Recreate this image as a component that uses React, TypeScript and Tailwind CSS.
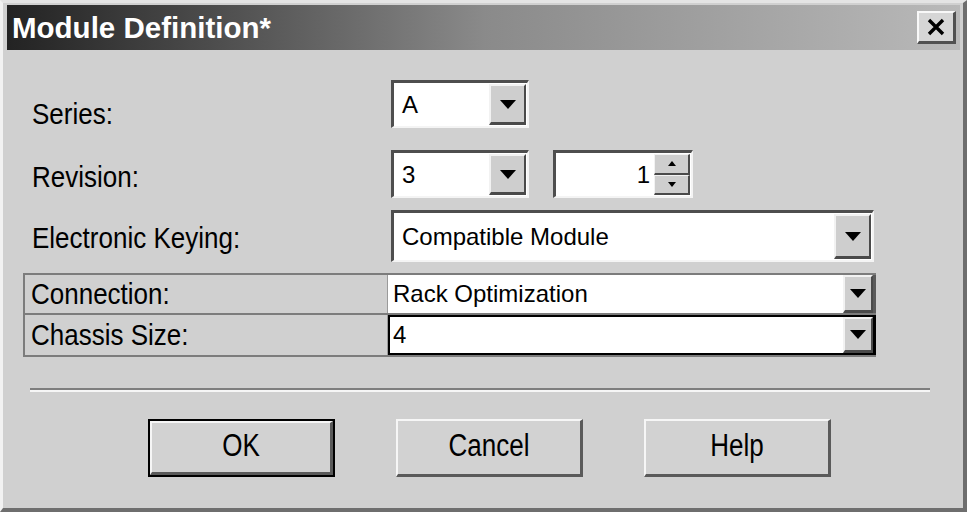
import React from "react";

const Arrow = () => (
  <svg width="16" height="9" viewBox="0 0 16 9">
    <polygon points="0,0 16,0 8,9" fill="#000" />
  </svg>
);

const DropBtn = ({ cls }: { cls: string }) => (
  <div
    className={
      "flex items-center justify-center bg-[#cecece] border-t-2 border-l-2 border-t-[#f2f2f2] border-l-[#f2f2f2] border-r-2 border-b-[3px] border-r-[#4a4a4a] border-b-[#4a4a4a] " +
      cls
    }
  >
    <Arrow />
  </div>
);

const Combo = ({ cls, text }: { cls: string; text: string }) => (
  <div
    className={
      "flex bg-white border-t-[3px] border-l-[3px] border-t-[#4e4e4e] border-l-[#4e4e4e] border-r-2 border-b-2 border-r-[#f4f4f4] border-b-[#f4f4f4] " +
      cls
    }
  >
    <div className="flex-1 flex items-center pl-[8px] text-[24px] text-black leading-none">
      {text}
    </div>
    <DropBtn cls="w-[37px] m-[1px]" />
  </div>
);

const Btn = ({ text, def }: { text: string; def?: boolean }) => (
  <div
    className={
      "w-[187px] h-[58px] " +
      (def ? "border-2 border-black" : "")
    }
  >
    <div className="w-full h-full flex items-center justify-center bg-[#d2d2d2] border-t-2 border-l-2 border-t-[#f6f6f6] border-l-[#f6f6f6] border-r-[3px] border-b-[3px] border-r-[#5a5a5a] border-b-[#5a5a5a] text-[26px] text-black">
      <span className="inline-block scale-y-[1.2] -translate-y-[2px]">{text}</span>
    </div>
  </div>
);

export default function App() {
  return (
    <div
      className="w-[967px] h-[512px] flex flex-col bg-[#d0d0d0] border-l-[3px] border-t-[3px] border-r-[4px] border-b-[4px] border-l-[#f2f2f2] border-t-[#e4e4e4] border-r-[#6e6e6e] border-b-[#6e6e6e] pl-[4px] pt-[2px] pr-[3px] overflow-hidden"
      style={{ fontFamily: '"Liberation Sans", Arial, sans-serif' }}
    >
      {/* Title bar */}
      <div className="h-[45px] shrink-0 flex items-center justify-between bg-gradient-to-r from-[#232323] via-[#8a8a8a] to-[#b9b9b9]">
        <span className="pl-[5px] text-[29.5px] font-bold text-white leading-none">
          Module Definition*
        </span>
        <div className="mr-[4px] w-[39px] h-[33px] flex items-center justify-center bg-[#d6d6d6] border-t-2 border-l-2 border-t-[#f8f8f8] border-l-[#f8f8f8] border-r-[3px] border-b-[3px] border-r-[#505050] border-b-[#505050]">
          <svg width="20" height="18" viewBox="0 0 20 18">
            <path d="M3 2 L17 16 M17 2 L3 16" stroke="#000" strokeWidth="3.4" />
          </svg>
        </div>
      </div>

      {/* Body */}
      <div className="flex flex-col text-black">
        {/* Series */}
        <div className="mt-[30px] h-[48px] flex items-center pl-[25px]">
          <span className="w-[359px] text-[26px] inline-block scale-y-[1.15] translate-y-[10px]">Series:</span>
          <Combo cls="w-[138px] h-[48px]" text="A" />
        </div>
        {/* Revision */}
        <div className="mt-[22px] h-[48px] flex items-center pl-[25px]">
          <span className="w-[359px] text-[26px] inline-block scale-y-[1.15] translate-y-[3px]">Revision:</span>
          <Combo cls="w-[138px] h-[48px]" text="3" />
          <div className="ml-[24px] w-[140px] h-[48px] flex bg-white border-t-[3px] border-l-[3px] border-t-[#4e4e4e] border-l-[#4e4e4e] border-r-2 border-b-2 border-r-[#f4f4f4] border-b-[#f4f4f4]">
            <div className="flex-1 flex items-center justify-end pr-[3px] text-[24px]">1</div>
            <div className="w-[36px] flex flex-col m-[1px]">
              <div className="flex-1 flex items-center justify-center bg-[#cecece] border-t border-l border-[#f2f2f2] border-r-2 border-b-2 border-r-[#4a4a4a] border-b-[#4a4a4a]">
                <svg width="8" height="5" viewBox="0 0 8 5">
                  <polygon points="0,5 8,5 4,0" fill="#000" />
                </svg>
              </div>
              <div className="flex-1 flex items-center justify-center bg-[#cecece] border-t border-l border-[#f2f2f2] border-r-2 border-b-2 border-r-[#4a4a4a] border-b-[#4a4a4a]">
                <svg width="8" height="5" viewBox="0 0 8 5">
                  <polygon points="0,0 8,0 4,5" fill="#000" />
                </svg>
              </div>
            </div>
          </div>
        </div>
        {/* Electronic Keying */}
        <div className="mt-[12px] h-[52px] flex items-center pl-[25px]">
          <span className="w-[359px] text-[26px] inline-block scale-y-[1.15] translate-y-[2px]">Electronic Keying:</span>
          <Combo cls="w-[483px] h-[52px]" text="Compatible Module" />
        </div>

        {/* Table */}
        <div className="mt-[11px] ml-[16px] w-[853px] flex flex-col border-t-2 border-l-2 border-[#7c7c7c]">
          <div className="h-[40px] flex border-b-2 border-[#7c7c7c]">
            <div className="w-[363px] flex items-center pl-[6px] text-[26px] border-r border-[#9a9a9a]">
              <span className="inline-block scale-y-[1.1]">Connection:</span>
            </div>
            <div className="flex-1 flex bg-white border-r-[3px] border-[#5a5a5a]">
              <div className="flex-1 flex items-center pl-[5px] text-[24px] leading-none">Rack Optimization</div>
              <DropBtn cls="w-[30px]" />
            </div>
          </div>
          <div className="h-[42px] flex border-b-2 border-[#7c7c7c]">
            <div className="w-[363px] flex items-center pl-[6px] text-[26px] border-r border-[#9a9a9a]">
              <span className="inline-block scale-y-[1.1]">Chassis Size:</span>
            </div>
            <div className="flex-1 flex bg-white border-2 border-black border-r-[3px]">
              <div className="flex-1 flex items-center pl-[3px] text-[24px] leading-none">4</div>
              <DropBtn cls="w-[30px]" />
            </div>
          </div>
        </div>

        {/* Separator */}
        <div className="mt-[31px] ml-[23px] w-[900px] border-t-2 border-b-2 border-t-[#7e7e7e] border-b-[#f6f6f6]" />

        {/* Buttons */}
        <div className="mt-[27px] ml-[141px] flex gap-[61px]">
          <Btn text="OK" def />
          <Btn text="Cancel" />
          <Btn text="Help" />
        </div>
      </div>
    </div>
  );
}
